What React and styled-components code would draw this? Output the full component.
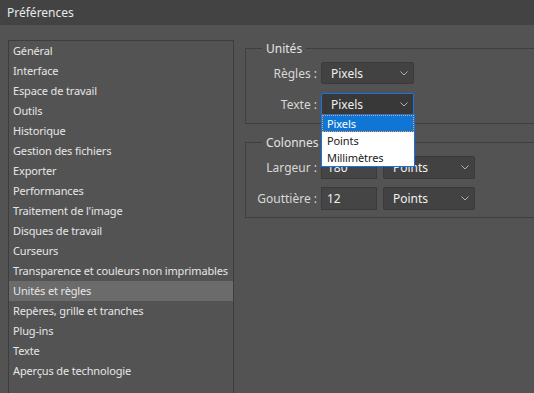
import React from "react";
import styled, { createGlobalStyle } from "styled-components";

const GlobalStyle = createGlobalStyle`
  html, body {
    margin: 0;
    padding: 0;
    background: #535353;
  }
  * {
    box-sizing: border-box;
  }
`;

const Window = styled.div`
  width: 534px;
  height: 393px;
  overflow: hidden;
  background: #535353;
  font-family: "Noto Sans", "Open Sans", sans-serif;
  font-size: 12px;
  color: #e4e4e4;
`;

const TitleBar = styled.div`
  height: 25px;
  background: #434343;
  padding-left: 7px;
  display: flex;
  align-items: center;
  font-size: 12px;
  color: #e8e8e8;
`;

const Body = styled.div`
  display: flex;
  padding: 15px 0 0 8px;
`;

const Sidebar = styled.ul`
  list-style: none;
  margin: 0;
  padding: 0;
  width: 226px;
  height: 380px;
  flex-shrink: 0;
  border: 1px solid #3d3d3d;
`;

const NavItem = styled.li`
  height: 20px;
  line-height: 20px;
  padding-left: 4px;
  white-space: nowrap;
  font-size: 11px;
  letter-spacing: -0.15px;
  color: #e6e6e6;
  background: ${(p) => (p.$active ? "#6b6b6b" : "transparent")};
`;

const Panel = styled.div`
  display: flex;
  flex-direction: column;
  gap: 10px;
  padding: 0 0 0 11px;
  width: 340px;
  flex-shrink: 0;
`;

const Group = styled.fieldset`
  margin: 0;
  padding: 5px 0 8px 0;
  border: 1px solid #3f3f3f;
  border-radius: 0;
  display: flex;
  flex-direction: column;
  gap: 9px;
`;

const Legend = styled.legend`
  margin-left: 16px;
  padding: 0 4px;
  font-size: 12px;
  color: #e4e4e4;
`;

const Row = styled.div`
  display: flex;
  align-items: center;
  height: 22px;
  position: relative;
`;

const Label = styled.label`
  width: 75px;
  text-align: right;
  padding-right: 4px;
  font-size: 12px;
  color: #d8d8d8;
  flex-shrink: 0;
`;

const Select = styled.div`
  width: ${(p) => p.$width}px;
  height: ${(p) => p.$height || 22}px;
  margin-left: ${(p) => p.$gap || 0}px;
  display: flex;
  align-items: center;
  justify-content: space-between;
  padding: 0 5px 0 9px;
  background: ${(p) => (p.$focus ? "#383838" : "#424242")};
  border: 1px solid ${(p) => (p.$focus ? "#1473e6" : "#3a3a3a")};
  border-radius: 2px;
  font-size: 12px;
  color: #f0f0f0;
`;

const Input = styled.div`
  width: 56px;
  height: 23px;
  display: flex;
  align-items: center;
  padding-left: 5px;
  background: #454545;
  border: 1px solid #3a3a3a;
  font-size: 12px;
  color: #f0f0f0;
`;

const Menu = styled.ul`
  position: absolute;
  left: 75px;
  top: 21px;
  width: 94px;
  margin: 0;
  padding: 0;
  list-style: none;
  background: #ffffff;
  border: 1px solid #1473e6;
  z-index: 2;
`;

const MenuItem = styled.li`
  height: 17px;
  line-height: 15px;
  padding-left: 4px;
  font-size: 11px;
  letter-spacing: -0.1px;
  color: ${(p) => (p.$selected ? "#ffffff" : "#1a1a1a")};
  background: ${(p) => (p.$selected ? "#0f76d6" : "transparent")};
  border: 1px dotted ${(p) => (p.$selected ? "#f5a04a" : "transparent")};
`;

const Chevron = () => (
  <svg width="8" height="5" viewBox="0 0 8 5">
    <path d="M0.5 0.5 L4 4 L7.5 0.5" fill="none" stroke="#b0b0b0" strokeWidth="1" />
  </svg>
);

const navItems = [
  "Général",
  "Interface",
  "Espace de travail",
  "Outils",
  "Historique",
  "Gestion des fichiers",
  "Exporter",
  "Performances",
  "Traitement de l'image",
  "Disques de travail",
  "Curseurs",
  "Transparence et couleurs non imprimables",
  "Unités et règles",
  "Repères, grille et tranches",
  "Plug-ins",
  "Texte",
  "Aperçus de technologie",
];

export default function App() {
  return (
    <Window>
      <GlobalStyle />
      <TitleBar>Préférences</TitleBar>
      <Body>
        <Sidebar>
          {navItems.map((item) => (
            <NavItem key={item} $active={item === "Unités et règles"}>
              {item}
            </NavItem>
          ))}
        </Sidebar>
        <Panel>
          <Group>
            <Legend>Unités</Legend>
            <Row>
              <Label>Règles :</Label>
              <Select $width={93}>
                Pixels
                <Chevron />
              </Select>
            </Row>
            <Row>
              <Label>Texte :</Label>
              <Select $width={93} $focus>
                Pixels
                <Chevron />
              </Select>
              <Menu>
                <MenuItem $selected>Pixels</MenuItem>
                <MenuItem>Points</MenuItem>
                <MenuItem>Millimètres</MenuItem>
              </Menu>
            </Row>
          </Group>
          <Group>
            <Legend>Colonnes</Legend>
            <Row>
              <Label>Largeur :</Label>
              <Input>180</Input>
              <Select $width={92} $height={23} $gap={6}>
                Points
                <Chevron />
              </Select>
            </Row>
            <Row>
              <Label>Gouttière :</Label>
              <Input>12</Input>
              <Select $width={92} $height={23} $gap={6}>
                Points
                <Chevron />
              </Select>
            </Row>
          </Group>
        </Panel>
      </Body>
    </Window>
  );
}
